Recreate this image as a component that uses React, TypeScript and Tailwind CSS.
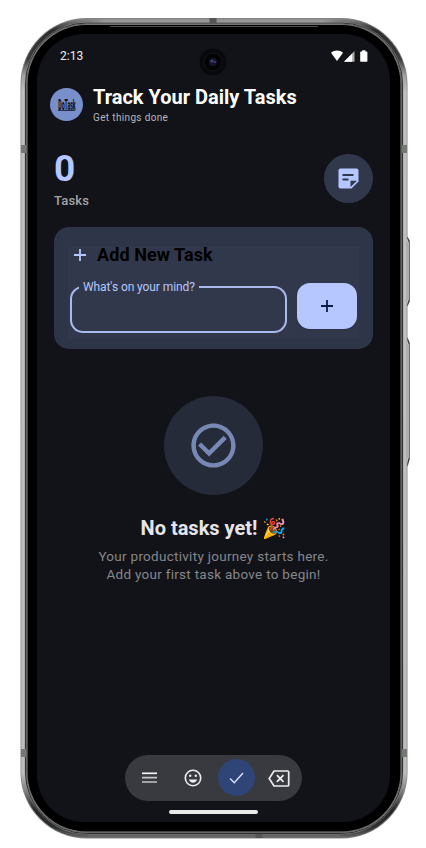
import React from 'react';

function PhoneFrame() {
  return (
    <svg className="absolute inset-0 h-[848px] w-[426px]" viewBox="0 0 426 848" fill="none" aria-hidden="true">
      <defs>
        <linearGradient id="rim" x1="0" y1="18" x2="0" y2="839" gradientUnits="userSpaceOnUse">
          <stop offset="0" stopColor="#8c8c8c" />
          <stop offset="0.015" stopColor="#2a2a2a" />
          <stop offset="0.05" stopColor="#3c3c3c" />
          <stop offset="0.07" stopColor="#a0a0a0" />
          <stop offset="0.09" stopColor="#c0c0bf" />
          <stop offset="0.92" stopColor="#bcbcbb" />
          <stop offset="0.94" stopColor="#858585" />
          <stop offset="0.965" stopColor="#242526" />
          <stop offset="0.985" stopColor="#2c2d2e" />
          <stop offset="1" stopColor="#6c6c6c" />
        </linearGradient>
        <linearGradient id="topRim" x1="70" y1="0" x2="356" y2="0" gradientUnits="userSpaceOnUse">
          <stop offset="0" stopColor="#777" stopOpacity="0" />
          <stop offset="0.12" stopColor="#999" />
          <stop offset="0.88" stopColor="#999" />
          <stop offset="1" stopColor="#777" stopOpacity="0" />
        </linearGradient>
      </defs>
      <path d="M407 237l2 4v60l-2 5M407 338l2 5v116l-2 7" stroke="#3d4043" strokeWidth="1.5" />
      <path d="M408 242v58M408 344v114" stroke="#c4c3c0" strokeWidth="1.5" />
      <rect x="20.5" y="18" width="387" height="820.5" rx="66" fill="#858686" />
      <rect x="23" y="20.5" width="382" height="815.5" rx="64" stroke="url(#rim)" strokeWidth="3.5" />
      <rect x="25.5" y="23" width="377" height="810.5" rx="61" stroke="#333" strokeWidth="1" />
      <rect x="26.5" y="24" width="375" height="808.5" rx="60" stroke="#5c5c5c" strokeWidth="0.8" />
      <rect x="27.5" y="25" width="373" height="806.5" rx="59" fill="#000" />
      <path d="M75 21H351" stroke="url(#topRim)" strokeWidth="3" />
      <path d="M110 26.5H318" stroke="#4d4d4d" strokeWidth="1" />
      <path d="M88 835.5H340" stroke="#666" strokeWidth="3" />
      <path d="M21 149h5M21 753h5M402 149h5M402 753h5" stroke="#747873" strokeWidth="8" />
      <path d="M213 18v5M259 834v4" stroke="#555" strokeWidth="7" />
      <rect x="37" y="34" width="353" height="788" rx="47" fill="#121318" />
      <circle cx="213" cy="62" r="13.5" fill="#08090c" />
      <circle cx="213" cy="62" r="9" fill="#030304" stroke="#15161a" />
      <circle cx="213" cy="62" r="4" fill="#14172c" />
      <circle cx="212" cy="61" r="1.6" fill="#34477c" />
      <circle cx="215" cy="62" r="1.2" fill="#4c2c68" />
    </svg>
  );
}

function StatusBar() {
  return (
    <div className="flex h-11 items-center justify-between pl-[23px] pr-[22px] text-[12px] leading-none text-[#ececf0]">
      <span>2:13</span>
      <svg className="h-3 w-[37px]" viewBox="0 0 37 12" fill="#fff" aria-hidden="true">
        <path d="M0 2.8C3.4-.3 8.6-.3 12 2.8L6 11z" />
        <path d="M13 11.8 23.5 1v10.8z" fill="#aaa" />
        <path d="M13 11.8 21.2 3.4v8.4z" />
        <path d="M29.9 1.6h1.3V.2h3.2v1.4h1.3c.4 0 .7.3.7.7v8.8c0 .4-.3.7-.7.7h-5.8c-.4 0-.7-.3-.7-.7V2.3c0-.4.3-.7.7-.7z" />
      </svg>
    </div>
  );
}

function Logo() {
  return (
    <div className="grid h-[33px] w-[33px] shrink-0 place-items-center rounded-full bg-[#788fcb]">
      <div className="flex flex-col items-center">
        <span className="flex h-3 w-[18px] origin-center scale-x-[0.4] scale-y-[1.15] items-center justify-center text-[13px] font-black leading-none text-[#10131c]">DoTask</span>
        <span className="h-px w-[17px] bg-[#28314a]" />
      </div>
    </div>
  );
}

function Plus({ color, className }: { color: string; className: string }) {
  return (
    <svg className={className} viewBox="0 0 12 12" aria-hidden="true">
      <path d="M6 0v12M0 6h12" stroke={color} strokeWidth="1.8" />
    </svg>
  );
}

function AddTask() {
  return (
    <section className="mx-[17px] mt-[23px] h-[122px] rounded-[15px] bg-[#2f3548] px-[14px] pt-[20px]">
      <div className="h-[91px] bg-[#32384b] px-[2px]">
        <div className="flex h-4 items-center gap-[11px] pl-1">
          <Plus color="#b5c7fb" className="h-3 w-3" />
          <h2 className="whitespace-nowrap text-[18px] font-bold leading-4 tracking-[0.08px] text-black">Add New Task</h2>
        </div>
        <div className="mt-[20px] flex items-start gap-[10px]">
          <fieldset className="-mt-[3px] h-[53px] w-[217px] rounded-[13px] border-2 border-[#a9baeb] pl-[7px]">
            <legend className="whitespace-nowrap px-[4px] pt-px text-[12px] leading-[13px] tracking-[-0.09px] text-[#b5c7fb]">What's on your mind?</legend>
          </fieldset>
          <button className="grid h-[46px] w-[60px] place-items-center rounded-[13px] bg-[#b5c7fe] shadow-sm">
            <Plus color="#071b4a" className="h-3 w-3" />
          </button>
        </div>
      </div>
    </section>
  );
}

function BottomBar() {
  return (
    <nav className="mx-auto flex h-[46px] w-[177px] items-center rounded-full bg-[#393a3f] pl-[16px] text-[#ededf0]">
      <svg className="h-4 w-[17px]" viewBox="0 0 17 16" aria-hidden="true">
        <path d="M1 3.3h15" stroke="#f4f4f5" strokeWidth="1.7" />
        <path d="M1 7.6h15M1 12h15" stroke="#c5c5c8" strokeWidth="1.7" />
      </svg>
      <svg className="ml-[26px] h-[18px] w-[18px]" viewBox="0 0 18 18" fill="none" aria-hidden="true">
        <circle cx="9" cy="9" r="7.7" stroke="currentColor" strokeWidth="1.6" />
        <path d="M4.8 10.5h8.4c-.6 2-2.2 3.2-4.2 3.2s-3.6-1.2-4.2-3.2z" fill="currentColor" />
        <circle cx="6.2" cy="6.8" r="1.2" fill="currentColor" />
        <circle cx="11.8" cy="6.8" r="1.2" fill="currentColor" />
      </svg>
      <span className="ml-[16px] grid h-[37px] w-[37px] place-items-center rounded-full bg-[#2f4578]">
        <svg className="h-3 w-[15px]" viewBox="0 0 15 12" fill="none" aria-hidden="true">
          <path d="M1 6.5l4.3 4.2L14 1" stroke="#d9e2ff" strokeWidth="1.4" />
        </svg>
      </span>
      <svg className="ml-[13px] mt-[2px] h-[17px] w-[22px]" viewBox="0 0 22 17" fill="none" stroke="currentColor" strokeWidth="1.7" aria-hidden="true">
        <path d="M6 1h13.7c.6 0 1 .4 1 1v13c0 .6-.4 1-1 1H6L1.2 8.5z" />
        <path d="M8.9 5.2l6.6 6.6M15.5 5.2l-6.6 6.6" strokeWidth="1.8" />
      </svg>
    </nav>
  );
}

export default function App() {
  return (
    <div className="relative h-[848px] w-[426px] overflow-hidden bg-white font-['Roboto',sans-serif]">
      <PhoneFrame />
      <main className="relative ml-[37px] flex h-[822px] w-[353px] flex-col pt-[34px]">
        <StatusBar />
        <header className="mt-[9px] flex h-[34px] items-center gap-[10px] pl-[13px]">
          <Logo />
          <div className="mt-[5px] whitespace-nowrap">
            <h1 className="text-[20px] font-bold leading-[22px] text-white">Track Your Daily Tasks</h1>
            <p className="text-[10px] leading-[19px] tracking-[0.35px] text-[#b6b6bb]">Get things done</p>
          </div>
        </header>
        <div className="mt-[29px] flex h-[54px] items-start justify-between pl-[17px] pr-[17px]">
          <div>
            <div className="text-[37px] font-bold leading-[38px] text-[#b5c7fe]">0</div>
            <div className="mt-[5px] text-[13px] font-medium leading-4 tracking-[0.2px] text-[#a4a4a8]">Tasks</div>
          </div>
          <div className="mt-[4px] grid h-[49px] w-[49px] place-items-center rounded-full bg-[#32384c]">
            <svg className="h-[21px] w-[21px]" viewBox="0 0 21 21" aria-hidden="true">
              <path d="M2.5.5h16c1.1 0 2 .9 2 2v11l-7 7h-11c-1.1 0-2-.9-2-2v-16c0-1.1.9-2 2-2z" fill="#b5c7fe" />
              <path d="M4.5 7h11M4.5 11.5h6" stroke="#32384c" strokeWidth="2" />
              <path d="M12.5 19v-6.2H19z" fill="#32384c" />
            </svg>
          </div>
        </div>
        <AddTask />
        <section className="mt-[47px] flex flex-col items-center">
          <div className="grid h-[99px] w-[99px] place-items-center rounded-full bg-[#262b3a]">
            <svg className="h-[53px] w-[53px]" viewBox="0 0 24 24" fill="#7888b5" aria-hidden="true">
              <path d="M16.59 7.58 10 14.17l-3.59-3.58L5 12l5 5 8-8zM12 2C6.48 2 2 6.48 2 12s4.48 10 10 10 10-4.48 10-10S17.52 2 12 2zm0 18c-4.42 0-8-3.58-8-8s3.58-8 8-8 8 3.58 8 8-3.58 8-8 8z" />
            </svg>
          </div>
          <h2 className="mt-[21px] whitespace-nowrap text-[20px] font-bold leading-6 text-[#e5e5e9]">No tasks yet! <span className="text-[19.5px]">🎉</span></h2>
          <p className="mt-[6px] whitespace-nowrap text-center text-[13.5px] leading-[18px] tracking-[0.28px] text-[#85868b]">Your productivity journey starts here.<br />Add your first task above to begin!</p>
        </section>
        <footer className="mt-auto pb-[8px]">
          <BottomBar />
          <div className="mx-auto mt-[9px] h-[4.5px] w-[89px] rounded-full bg-[#eae9e9]" />
        </footer>
      </main>
    </div>
  );
}
